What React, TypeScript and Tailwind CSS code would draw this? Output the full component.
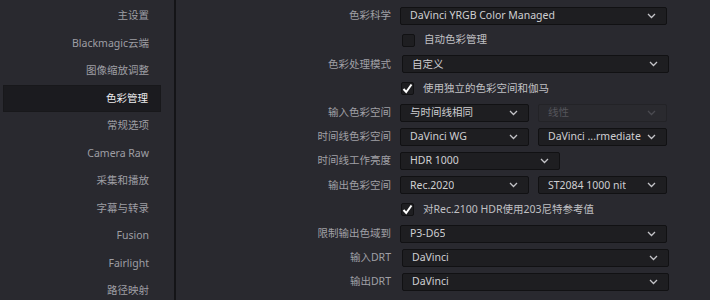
const font = { fontFamily: '"Noto Sans", "Noto Sans CJK SC", sans-serif' }

const navItems = [
  "主设置",
  "Blackmagic云端",
  "图像缩放调整",
  "色彩管理",
  "常规选项",
  "Camera Raw",
  "采集和播放",
  "字幕与转录",
  "Fusion",
  "Fairlight",
  "路径映射",
]

function Chevron({ dim }: { dim?: boolean }) {
  return (
    <svg width="9" height="6" viewBox="0 0 9 6" className="shrink-0">
      <polyline
        points="1,1 4.5,4.5 8,1"
        fill="none"
        stroke={dim ? "#4a4a50" : "#c4c4c8"}
        strokeWidth="1.3"
      />
    </svg>
  )
}

function Select({ value, w, disabled }: { value: string; w: string; disabled?: boolean }) {
  return (
    <div
      className={`${w} h-[18px] flex items-center justify-between gap-[4px] pl-[9px] pr-[10px] rounded-[2px] border ${
        disabled ? "border-[#232327] bg-[#2a2a2f] text-[#55555b]" : "border-[#111113] bg-[#1e1e21] text-[#cfcfd2]"
      }`}
    >
      <span className="truncate min-w-0">{value}</span>
      <Chevron dim={disabled} />
    </div>
  )
}

function Checkbox({ checked }: { checked?: boolean }) {
  return (
    <div className="w-[13px] h-[13px] rounded-[2px] border border-[#111113] bg-[#1e1e21] flex items-center justify-center">
      {checked && (
        <svg width="11" height="11" viewBox="0 0 11 11">
          <polyline points="1.5,6 4.2,9 9.5,1.5" fill="none" stroke="#ffffff" strokeWidth="2" />
        </svg>
      )}
    </div>
  )
}

function Row({ label, children }: { label?: string; children: React.ReactNode }) {
  return (
    <div className="h-[24.2px] flex items-center">
      <div className="w-[215px] text-right text-[#a0a0a6] shrink-0">{label}</div>
      <div className="ml-[9px] flex items-center gap-[9px]">{children}</div>
    </div>
  )
}

function CheckRow({ label, checked, offset }: { label: string; checked?: boolean; offset: string }) {
  return (
    <Row>
      <div className={`flex items-center ${offset}`}>
        <Checkbox checked={checked} />
        <span className="ml-[9px] text-[#c0c0c4]">{label}</span>
      </div>
    </Row>
  )
}

export default function App() {
  return (
    <div className="w-[710px] h-[300px] flex overflow-hidden bg-[#29292f] text-[10.5px]" style={font}>
      <div className="w-[174px] shrink-0 pt-[2.25px]">
        {navItems.map((item) => {
          const active = item === "色彩管理"
          return (
            <div
              key={item}
              className={`h-[27.5px] ml-[3px] w-[158px] flex items-center justify-end pr-[12px] ${
                active ? "bg-[#1b1b1f] text-[#ececee] border border-[#18181b]" : "text-[#9e9ea4]"
              }`}
            >
              {item}
            </div>
          )
        })}
      </div>
      <div className="w-[2px] shrink-0 bg-[#141417]" />
      <div className="flex-1 pt-[4px]">
        <Row label="色彩科学">
          <Select value="DaVinci YRGB Color Managed" w="w-[267px]" />
        </Row>
        <CheckRow label="自动色彩管理" offset="ml-[2px]" />
        <Row label="色彩处理模式">
          <div className="ml-[2px]">
            <Select value="自定义" w="w-[267px]" />
          </div>
        </Row>
        <CheckRow label="使用独立的色彩空间和伽马" checked offset="ml-[1px]" />
        <Row label="输入色彩空间">
          <Select value="与时间线相同" w="w-[129px]" />
          <Select value="线性" w="w-[129px]" disabled />
        </Row>
        <Row label="时间线色彩空间">
          <Select value="DaVinci WG" w="w-[129px]" />
          <Select value="DaVinci ...rmediate" w="w-[129px]" />
        </Row>
        <Row label="时间线工作亮度">
          <Select value="HDR 1000" w="w-[160px]" />
        </Row>
        <Row label="输出色彩空间">
          <Select value="Rec.2020" w="w-[129px]" />
          <Select value="ST2084 1000 nit" w="w-[129px]" />
        </Row>
        <CheckRow label="对Rec.2100 HDR使用203尼特参考值" checked offset="ml-[1px]" />
        <Row label="限制输出色域到">
          <Select value="P3-D65" w="w-[267px]" />
        </Row>
        <Row label="输入DRT">
          <div className="ml-[2px]">
            <Select value="DaVinci" w="w-[267px]" />
          </div>
        </Row>
        <Row label="输出DRT">
          <div className="ml-[2px]">
            <Select value="DaVinci" w="w-[267px]" />
          </div>
        </Row>
        <CheckRow label="" offset="ml-[2px]" />
      </div>
    </div>
  )
}
